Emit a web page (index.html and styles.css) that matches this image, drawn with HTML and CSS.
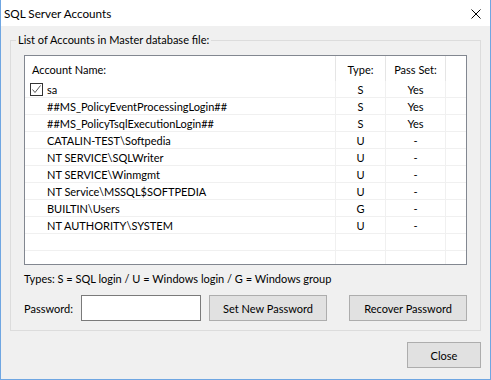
FILE: index.html
```html
<!DOCTYPE html>
<html lang="en">
<head>
<meta charset="utf-8">
<title>SQL Server Accounts</title>
<link rel="stylesheet" href="styles.css">
</head>
<body>
<div class="window">
  <div class="titlebar">
    <span class="title">SQL Server Accounts</span>
    <svg class="close-x" width="10" height="10" viewBox="0 0 10 10"><path d="M0.5 0.5 L9.5 9.5 M9.5 0.5 L0.5 9.5" stroke="#000" stroke-width="1" fill="none"/></svg>
  </div>
  <div class="client">
    <fieldset class="group">
      <legend>List of Accounts in Master database file:</legend>
      <div class="listview">
        <div class="lv-row lv-header">
          <div class="cell h-name">Account Name:</div>
          <div class="cell c-type">Type:</div>
          <div class="cell c-pass">Pass Set:</div>
          <div class="cell c-rest"></div>
        </div>
        <div class="lv-body">
          <div class="lv-row">
            <div class="cell c-name checked"><span class="check"><svg width="11" height="11" viewBox="0 0 11 11"><path d="M1.5 5.5 L4 8.5 L9.5 1.5" stroke="#555" stroke-width="1" fill="none"/></svg></span>sa</div>
            <div class="cell c-type">S</div><div class="cell c-pass">Yes</div><div class="cell c-rest"></div>
          </div>
          <div class="lv-row">
            <div class="cell c-name">##MS_PolicyEventProcessingLogin##</div>
            <div class="cell c-type">S</div><div class="cell c-pass">Yes</div><div class="cell c-rest"></div>
          </div>
          <div class="lv-row">
            <div class="cell c-name">##MS_PolicyTsqlExecutionLogin##</div>
            <div class="cell c-type">S</div><div class="cell c-pass">Yes</div><div class="cell c-rest"></div>
          </div>
          <div class="lv-row">
            <div class="cell c-name">CATALIN-TEST\Softpedia</div>
            <div class="cell c-type">U</div><div class="cell c-pass">-</div><div class="cell c-rest"></div>
          </div>
          <div class="lv-row">
            <div class="cell c-name">NT SERVICE\SQLWriter</div>
            <div class="cell c-type">U</div><div class="cell c-pass">-</div><div class="cell c-rest"></div>
          </div>
          <div class="lv-row">
            <div class="cell c-name">NT SERVICE\Winmgmt</div>
            <div class="cell c-type">U</div><div class="cell c-pass">-</div><div class="cell c-rest"></div>
          </div>
          <div class="lv-row">
            <div class="cell c-name">NT Service\MSSQL$SOFTPEDIA</div>
            <div class="cell c-type">U</div><div class="cell c-pass">-</div><div class="cell c-rest"></div>
          </div>
          <div class="lv-row">
            <div class="cell c-name">BUILTIN\Users</div>
            <div class="cell c-type">G</div><div class="cell c-pass">-</div><div class="cell c-rest"></div>
          </div>
          <div class="lv-row">
            <div class="cell c-name">NT AUTHORITY\SYSTEM</div>
            <div class="cell c-type">U</div><div class="cell c-pass">-</div><div class="cell c-rest"></div>
          </div>
          <div class="lv-row">
            <div class="cell c-name"></div><div class="cell c-type"></div><div class="cell c-pass"></div><div class="cell c-rest"></div>
          </div>
          <div class="lv-row">
            <div class="cell c-name"></div><div class="cell c-type"></div><div class="cell c-pass"></div><div class="cell c-rest"></div>
          </div>
        </div>
      </div>
      <p class="types">Types: S = SQL login / U = Windows login / G = Windows group</p>
      <div class="pw-row">
        <label class="pw-label" for="pw">Password:</label>
        <input class="pw-input" id="pw" type="text">
        <button class="btn btn-set">Set New Password</button>
        <button class="btn btn-recover">Recover Password</button>
      </div>
    </fieldset>
    <div class="footer">
      <button class="btn btn-close">Close</button>
    </div>
  </div>
</div>
</body>
</html>
```

FILE: styles.css
```css
* { box-sizing: border-box; }
html, body { margin: 0; padding: 0; }
body {
  width: 491px;
  height: 380px;
  overflow: hidden;
  font-family: Lato, "Liberation Sans", sans-serif;
  font-size: 11px;
  color: #000;
  background: #f0f0f0;
}
.window {
  position: relative;
  width: 491px;
  height: 380px;
  border: 1px solid #6fa6e2;
  border-top: 0;
  background: #f0f0f0;
  display: flex;
  flex-direction: column;
}
.titlebar {
  height: 26px;
  flex: none;
  background: #fff;
  display: flex;
  align-items: center;
  justify-content: space-between;
  padding: 0 9px 0 3px;
  line-height: 26px;
  font-size: 11.7px;
}
.close-x { display: block; margin-top: 2px; }
.client { flex: 1; display: flex; flex-direction: column; }
.group {
  margin: 6px 9px 0 9px;
  padding: 7px 13px 9px;
  border: 1px solid #dcdcdc;
  min-width: 0;
}
.group legend {
  padding: 0 2px;
  margin-left: -8px;
  line-height: 16px;
}
.listview {
  height: 210px;
  border: 1px solid #828790;
  background: #fff;
  overflow: hidden;
}
.lv-row {
  display: grid;
  grid-template-columns: 311px 50px 60px 1fr;
}
.lv-header { height: 25px; line-height: 27px; }
.lv-header .cell { border-right: 1px solid #e5e5e5; }
.lv-header .c-rest { border-right: 0; }
.h-name { padding-left: 7px; }
.lv-body .lv-row {
  height: 17px;
  line-height: 17px;
  border-bottom: 1px solid #f0f0f0;
}
.lv-body .cell { border-right: 1px solid #f0f0f0; white-space: nowrap; }
.lv-body .c-rest { border-right: 0; }
.c-type, .c-pass { text-align: center; }
.c-name { padding-left: 22px; }
.c-name.checked {
  padding-left: 5px;
  display: flex;
  align-items: center;
  gap: 4px;
}
.check {
  width: 13px;
  height: 13px;
  border: 1px solid #333;
  background: #fff;
  display: flex;
  align-items: center;
  justify-content: center;
}
.check svg { display: block; }
.types { margin: 5px 0 0; line-height: 17px; white-space: nowrap; }
.pw-row {
  display: flex;
  align-items: center;
  margin-top: 8px;
  height: 26px;
}
.pw-label { width: 57px; flex: none; padding-top: 1px; }
.pw-input {
  width: 120px;
  height: 26px;
  border: 1px solid #7a7a7a;
  background: #fff;
  margin: 0;
  padding: 0 3px;
  font: inherit;
  outline: none;
}
.btn {
  height: 26px;
  width: 118px;
  border: 1px solid #adadad;
  background: #e1e1e1;
  font: inherit;
  color: #000;
  padding: 1px 0 0;
  margin: 0;
  flex: none;
}
.btn-set { margin-left: 8px; }
.btn-recover { margin-left: 22px; }
.footer {
  display: flex;
  justify-content: flex-end;
  padding: 11px 9px 0 0;
}
.btn-close { width: 74px; }
```
